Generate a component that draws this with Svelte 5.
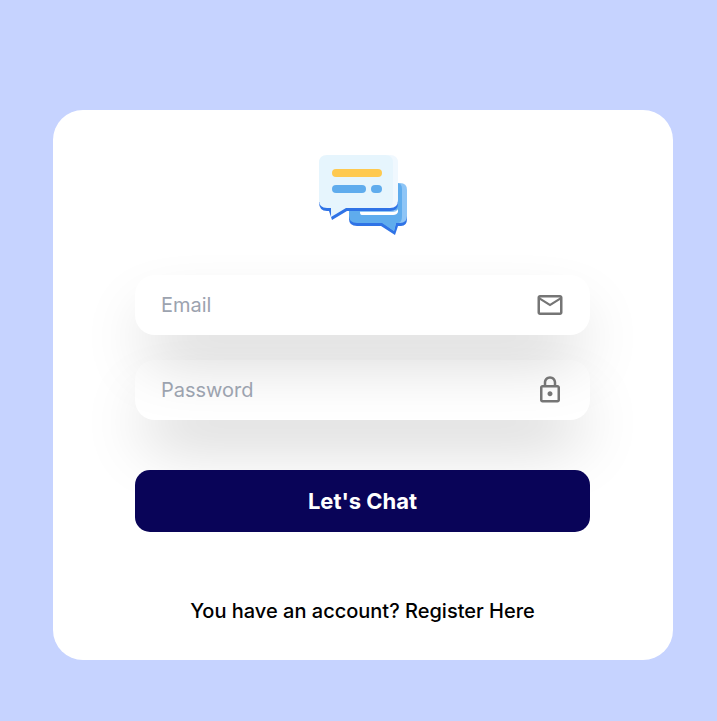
<script>
  let email = $state('');
  let password = $state('');
</script>

<main>
  <form class="card" onsubmit={(e) => e.preventDefault()}>
    <svg class="logo" viewBox="0 0 88 82" aria-hidden="true">
      <path fill="#2f73e6" d="M30 52H88V64Q88 71 82 71H79L76 80L62 71H38Q30 71 30 64Z" />
      <path fill="#8ec5f6" d="M70 28H81Q88 28 88 35V61Q88 68 81 68H77L75 76L64 68H70Z" />
      <path fill="#5faced" d="M30 48H77L78 28Q83 28 83 34V61Q83 68 79 68H77L75 76L63 68H38Q30 68 30 61Z" />
      <path fill="#8ec5f6" d="M41 55H79V52Q79 59 73 60H43Q41 60 41 58Z" />
      <path fill="#fff" d="M41 57H73Q78 57 79 54V57Q78 60 74 60H43Q41 60 41 57Z" />
      <path fill="#2f73e6" d="M0 47H79V48Q79 56 71 56H28L13 65L12 62L10 56H8Q0 56 0 47Z" />
      <path fill="#f0f8fe" d="M64 0H71Q79 0 79 8V45Q79 53 71 53H64Z" />
      <path fill="#e6f5fd" d="M8 0H66Q74 0 74 8V45Q74 53 67 53H27L12 62V53H8Q0 53 0 45V8Q0 0 8 0Z" />
      <rect x="13" y="14" width="50" height="8" rx="4" fill="#fec94f" />
      <rect x="13" y="30" width="34" height="8" rx="4" fill="#5faced" />
      <rect x="52" y="30" width="11" height="8" rx="4" fill="#5faced" />
    </svg>

    <div class="fields">
      <label class="field">
        <input type="email" placeholder="Email" aria-label="Email" bind:value={email} />
        <svg viewBox="0 0 24 24" aria-hidden="true">
          <path d="M22 6c0-1.100-.9-2-2-2H4c-1.100 0-2 .9-2 2v12c0 1.100.9 2 2 2h16c1.100 0 2-.9 2-2V6zm-2 0l-8 5-8-5h16zm0 12H4V8l8 5 8-5v10z" />
        </svg>
      </label>
      <label class="field">
        <input type="password" placeholder="Password" aria-label="Password" bind:value={password} />
        <svg viewBox="0 0 24 24" aria-hidden="true">
          <path d="M18 8h-1V6c0-2.760-2.240-5-5-5S7 3.240 7 6v2H6c-1.100 0-2 .9-2 2v10c0 1.100.9 2 2 2h12c1.100 0 2-.9 2-2V10c0-1.100-.9-2-2-2zM9 6c0-1.660 1.340-3 3-3s3 1.340 3 3v2H9V6zm9 14H6V10h12v10zm-6-3c1.100 0 2-.9 2-2s-.9-2-2-2-2 .9-2 2 .9 2 2 2z" />
        </svg>
      </label>
    </div>

    <button type="submit">Let's Chat</button>
    <a href="#register">You have an account? Register Here</a>
  </form>
</main>

<style>
  :global(body) {
    margin: 0;
    background: #c6d3ff;
  }

  main {
    box-sizing: border-box;
    min-height: 100vh;
    padding: 110px 44px 60px 53px;
    font-family: Inter, 'Liberation Sans', sans-serif;
  }

  .card {
    box-sizing: border-box;
    display: flex;
    flex-direction: column;
    align-items: center;
    max-width: 620px;
    margin: 0 auto;
    padding: 45px 83px 34px 82px;
    border-radius: 30px;
    background: #fff;
  }

  .logo {
    width: 88px;
    height: 82px;
  }

  .fields {
    display: flex;
    flex-direction: column;
    gap: 25px;
    width: 100%;
    margin-top: 38px;
  }

  .field {
    box-sizing: border-box;
    display: flex;
    align-items: center;
    height: 60px;
    padding: 0 25px 0 26px;
    border-radius: 20px;
    box-shadow: 0 32px 64px -12px rgba(0, 0, 0, 0.23);
  }

  .field svg {
    flex: none;
    width: 30px;
    height: 30px;
    fill: #757575;
  }

  input {
    flex: 1;
    min-width: 0;
    padding: 0;
    border: 0;
    outline: 0;
    background: transparent;
    color: #111;
    font: 400 20px/30px Inter, 'Liberation Sans', sans-serif;
  }

  input::placeholder {
    color: #9ca3af;
    opacity: 1;
  }

  button {
    position: relative;
    width: 100%;
    height: 62px;
    margin-top: 50px;
    padding: 0;
    border: 0;
    border-radius: 15px;
    background: #090458;
    color: #fff;
    font: 700 22px/32px Inter, 'Liberation Sans', sans-serif;
    cursor: pointer;
  }

  a {
    margin-top: 64px;
    color: #000;
    font-size: 20px;
    font-weight: 500;
    line-height: 30px;
    text-decoration: none;
    text-align: center;
  }
</style>
